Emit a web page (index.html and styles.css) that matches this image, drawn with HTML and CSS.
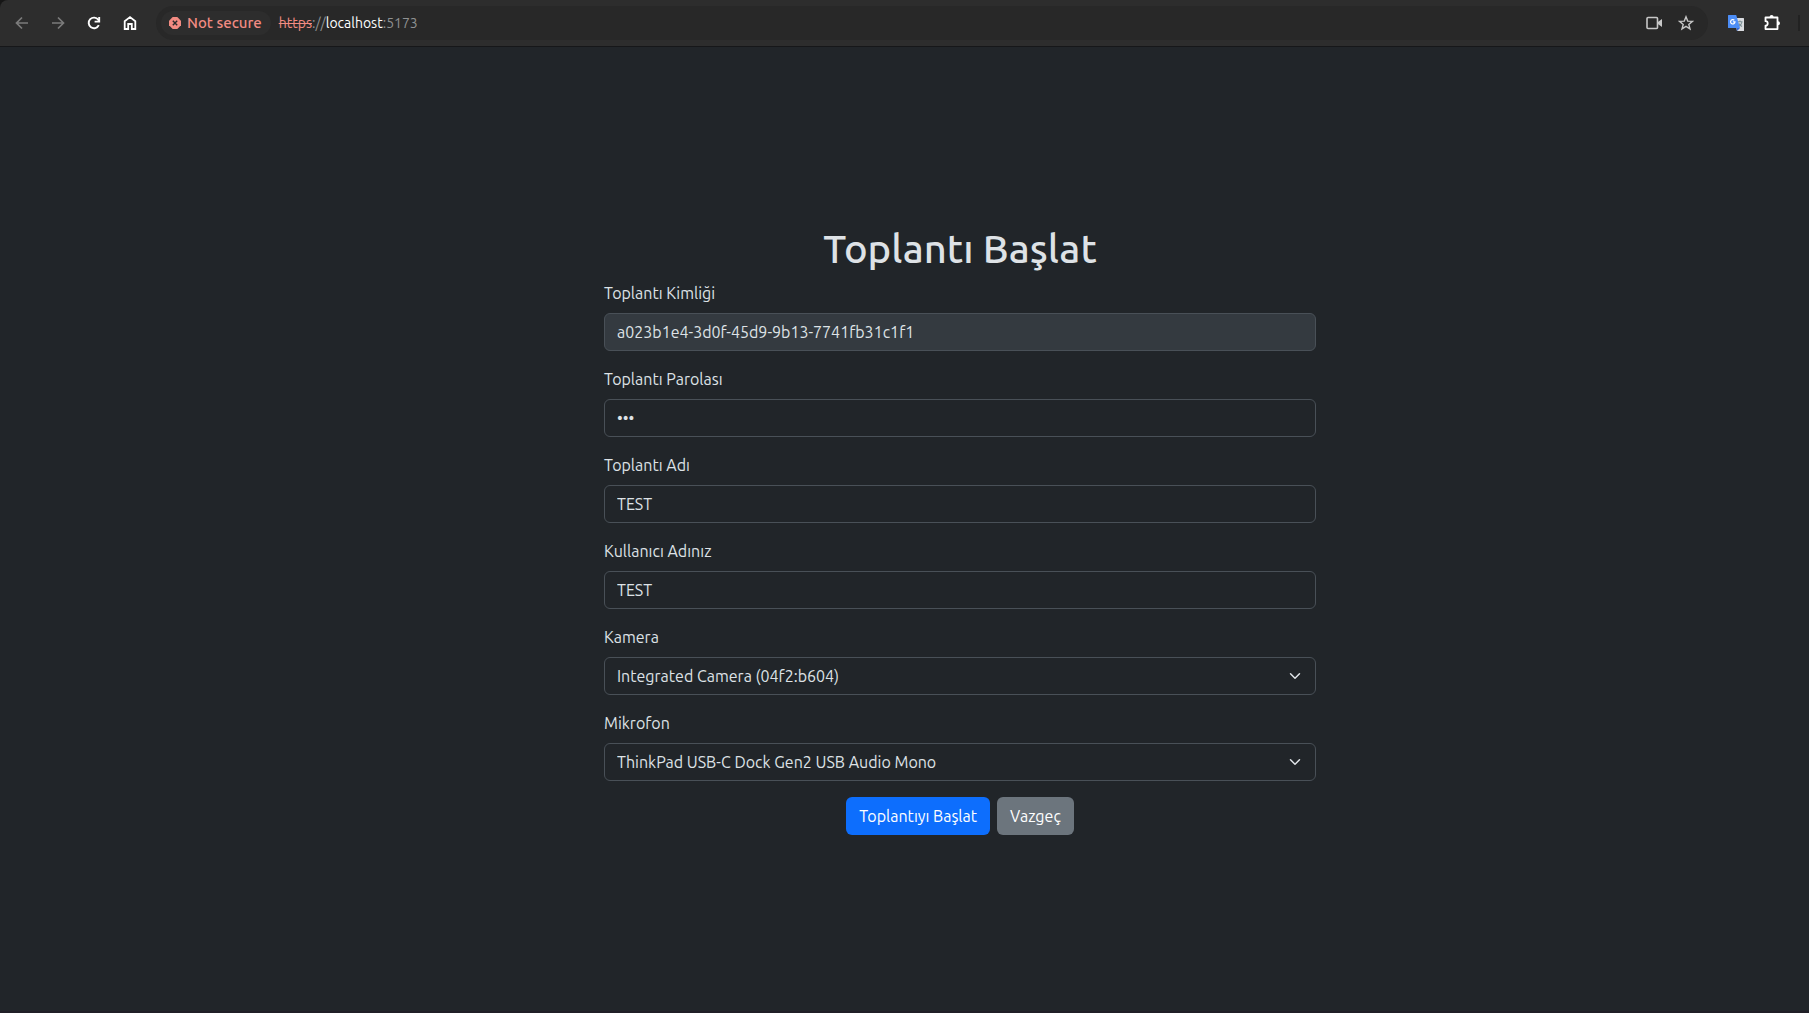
FILE: index.html
```html
<!DOCTYPE html>
<html lang="tr">
<head>
<meta charset="utf-8">
<meta name="viewport" content="width=device-width, initial-scale=1">
<title>Toplantı Başlat</title>
<link rel="stylesheet" href="styles.css">
</head>
<body>
<header class="toolbar">
  <nav class="nav-buttons" aria-label="Browser">
    <button class="icon-button dim" type="button" aria-label="Back"><svg viewBox="0 0 16 16" fill="none" stroke="currentColor" stroke-width="1.7"><path d="M14 8H3M8 2.5 2.5 8 8 13.5"/></svg></button>
    <button class="icon-button dim" type="button" aria-label="Forward"><svg viewBox="0 0 16 16" fill="none" stroke="currentColor" stroke-width="1.7"><path d="M2 8h11M8 2.5 13.5 8 8 13.5"/></svg></button>
    <button class="icon-button" type="button" aria-label="Reload"><svg viewBox="0 0 16 16" fill="none" stroke="currentColor" stroke-width="1.9"><path d="M12.8 10.2A5.3 5.3 0 1 1 12.3 4.8L13 6"/><path d="M13.2 2v4.6H8.6"/></svg></button>
    <button class="icon-button" type="button" aria-label="Home"><svg viewBox="0 0 16 16" fill="none" stroke="currentColor" stroke-width="1.8"><path d="M2.7 14V6.2L8 2.1l5.3 4.1V14H9.8V9H6.2v5z"/></svg></button>
  </nav>
  <div class="address">
    <button class="security" type="button">
      <svg viewBox="0 0 12 12"><path fill="#f28b82" d="M3.7 0h4.6L12 3.7v4.6L8.3 12H3.7L0 8.3V3.7z"/><path stroke="#2b2b2b" stroke-width="1.4" d="m3.8 3.8 4.4 4.4m0-4.4L3.8 8.2"/></svg>
      <span>Not secure</span>
    </button>
    <div class="url"><s>https</s>://<b>localhost</b>:5173</div>
    <button class="icon-button soft" type="button" aria-label="Camera"><svg viewBox="0 0 16 16" fill="none" stroke="currentColor" stroke-width="1.6"><rect x="1" y="2.5" width="10.5" height="11" rx="1"/><path fill="currentColor" stroke="none" d="M11.5 7.2 16 4v8l-4.500-3.200z"/></svg></button>
    <button class="icon-button soft" type="button" aria-label="Bookmark"><svg viewBox="0 0 16 16" fill="none" stroke="currentColor" stroke-width="1.4"><path d="m8 1.800 1.700 4.300 4.700.3-3.600 3 1.200 4.500L8 11.400l-4 2.500 1.200-4.500-3.600-3 4.700-.3z"/></svg></button>
  </div>
  <div class="extensions">
    <button class="icon-button" type="button" aria-label="Translate"><svg viewBox="0 0 16 16"><path fill="#dadce0" d="M6 3h9.500a.5.500 0 0 1 .5.500v12a.5.500 0 0 1-.5.500H9z"/><path stroke="#7b8f95" stroke-width="1.1" fill="none" d="M9.500 6.800h5M12 5.500v1.300M14 7c-.4 2-1.800 3.600-3.500 4.600M11 8.500c.6 1.400 1.700 2.400 3 3"/><path fill="#3367d6" d="M8.500 13H12l-3 3z"/><path fill="#4c8df6" d="M.5 0h7.700L12 13H.5a.5.500 0 0 1-.5-.5V.5A.5.500 0 0 1 .5 0z"/><path fill="none" stroke="#fff" stroke-width="1.2" d="M6.300 5.200A2.200 2.200 0 1 0 7 6.800H4.900"/></svg></button>
    <button class="icon-button" type="button" aria-label="Extensions"><svg viewBox="0 0 16 16" fill="none" stroke="currentColor" stroke-width="1.8" stroke-linejoin="round"><path d="M1.500 2.500h12v11.600h-12V10.600a2.200 2.200 0 0 0 0-4.400z"/><path fill="currentColor" stroke="none" d="M5.600 2a2 2 0 0 1 4 0zM14 6.200a2 2 0 0 1 0 4z"/></svg></button>
    <span class="divider"></span>
  </div>
</header>
<main class="page">
  <form class="meeting">
    <h1 class="title">Toplantı Başlat</h1>
    <div class="field">
      <label for="meeting-id">Toplantı Kimliği</label>
      <input class="control" id="meeting-id" type="text" value="a023b1e4-3d0f-45d9-9b13-7741fb31c1f1" readonly>
    </div>
    <div class="field">
      <label for="password">Toplantı Parolası</label>
      <input class="control" id="password" type="password" value="123">
    </div>
    <div class="field">
      <label for="meeting-name">Toplantı Adı</label>
      <input class="control" id="meeting-name" type="text" value="TEST">
    </div>
    <div class="field">
      <label for="user-name">Kullanıcı Adınız</label>
      <input class="control" id="user-name" type="text" value="TEST">
    </div>
    <div class="field">
      <label for="camera">Kamera</label>
      <select class="control select" id="camera"><option>Integrated Camera (04f2:b604)</option></select>
    </div>
    <div class="field">
      <label for="microphone">Mikrofon</label>
      <select class="control select" id="microphone"><option>ThinkPad USB-C Dock Gen2 USB Audio Mono</option></select>
    </div>
    <div class="actions">
      <button class="btn primary" type="button">Toplantıyı Başlat</button>
      <button class="btn secondary" type="button">Vazgeç</button>
    </div>
  </form>
</main>
</body>
</html>
```
FILE: styles.css
```css
* { box-sizing: border-box; }

body {
  margin: 0;
  min-height: 100vh;
  display: flex;
  flex-direction: column;
  background: #161616;
  color: #dee2e6;
  font: 16px/24px Ubuntu, "Noto Sans", sans-serif;
}

button { font: inherit; border: 0; cursor: pointer; }

.toolbar {
  display: flex;
  align-items: center;
  height: 47px;
  padding: 0 9px 0 14px;
  border-top-left-radius: 8px;
  background: #2d2d2d;
  border-bottom: 1px solid #161719;
}

.nav-buttons { display: flex; gap: 20px; margin-right: 18px; }

.icon-button {
  display: flex;
  padding: 0;
  background: none;
  color: #fff;
}
.icon-button svg { width: 16px; height: 16px; }
.dim { color: #7b7b7b; }
.soft { color: #c7c7c7; }

.address {
  flex: 1;
  display: flex;
  align-items: center;
  gap: 16px;
  height: 34px;
  padding: 0 14px 0 5px;
  border-radius: 17px;
  background: #282828;
  font-size: 14px;
  line-height: 20px;
}

.security {
  display: flex;
  align-items: center;
  gap: 6px;
  height: 24px;
  padding: 0 9px 0 8px;
  border-radius: 12px;
  background: #2d2d2d;
  color: #f28b82;
  font-size: 15px;
  font-weight: 500;
}
.security svg { width: 12px; height: 12px; }

.url { flex: 1; margin-left: -8px; color: #8f9192; }
.url s { color: #f28b82; }
.url b { color: #fff; font-weight: 400; }

.extensions {
  display: flex;
  align-items: center;
  gap: 20px;
  margin-left: 20px;
}
.divider { width: 2px; height: 16px; margin-left: -2px; background: #222; }

.page {
  flex: 1;
  display: flex;
  align-items: center;
  justify-content: center;
  padding: 2px 0 0 111px;
  background: #212529;
  border-bottom: 2px solid #201f27;
}

.meeting { width: 100%; max-width: 712px; }

.title {
  margin: 0 0 8px;
  font-size: 40px;
  line-height: 48px;
  font-weight: 500;
  text-align: center;
}

.field {
  display: flex;
  flex-direction: column;
  gap: 8px;
  margin-bottom: 16px;
}

.control {
  width: 100%;
  height: 38px;
  padding: 6px 12px;
  border: 1px solid #495057;
  border-radius: 6px;
  background: #212529;
  color: inherit;
  font: inherit;
  appearance: none;
}
.control:read-only:not(select) { background: #343a40; }

.select {
  padding-right: 36px;
  background: #212529 url("data:image/svg+xml,%3csvg xmlns='http://www.w3.org/2000/svg' viewBox='0 0 16 16'%3e%3cpath fill='none' stroke='%23dee2e6' stroke-linecap='round' stroke-linejoin='round' stroke-width='2' d='m2 5 6 6 6-6'/%3e%3c/svg%3e") no-repeat right 12px center / 16px 12px;
}

.actions { display: flex; justify-content: center; gap: 7px; }

.btn {
  height: 38px;
  padding: 0 13px;
  border-radius: 6px;
  color: #fff;
}
.primary { background: #0d6efd; }
.secondary { background: #6c757d; }
```
